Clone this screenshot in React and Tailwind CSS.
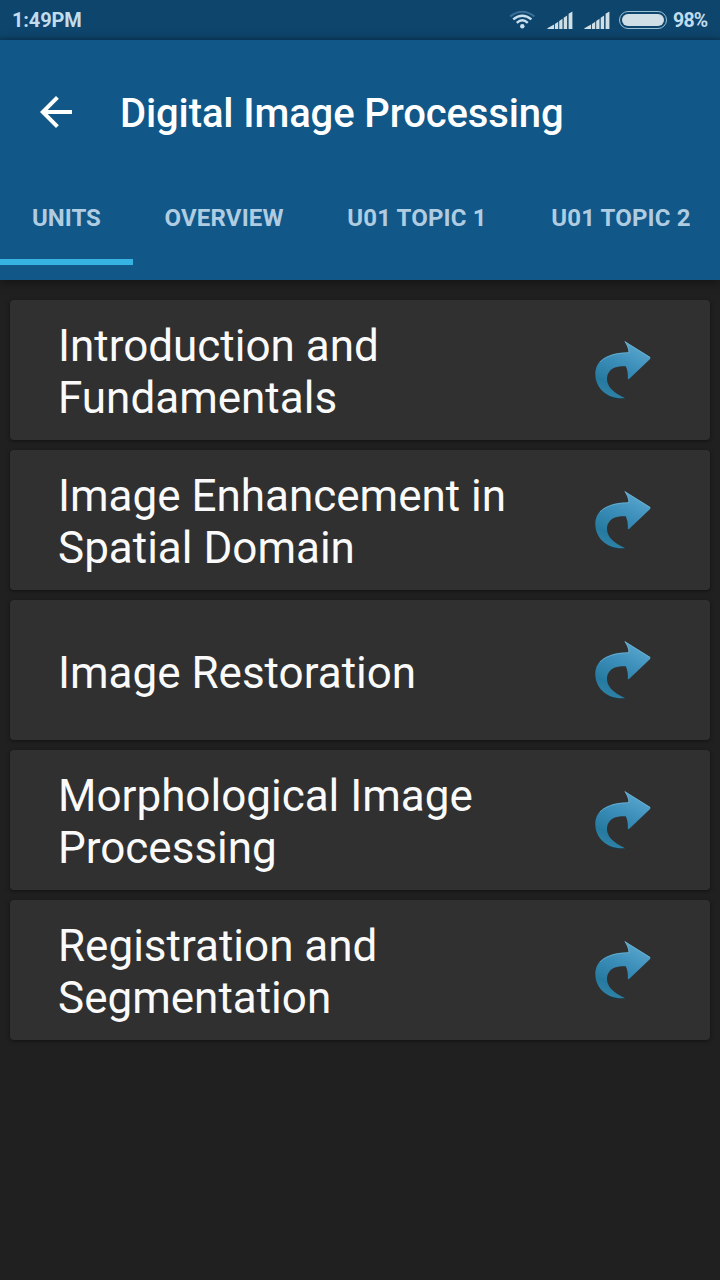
const units = [
  ["Introduction and", "Fundamentals"],
  ["Image Enhancement in", "Spatial Domain"],
  ["Image Restoration"],
  ["Morphological Image", "Processing"],
  ["Registration and", "Segmentation"],
];

const tabs = [
  { label: "UNITS", width: "w-[68.6px]", tracking: "tracking-normal" },
  { label: "OVERVIEW", width: "w-[118.7px]", tracking: "tracking-[0.15px]" },
  { label: "U01 TOPIC 1", width: "w-[140px]", tracking: "tracking-[0.15px]" },
  { label: "U01 TOPIC 2", width: "w-[140px]", tracking: "tracking-[0.15px]" },
];

function Wifi() {
  return (
    <svg className="h-5 w-[26px] shrink-0" viewBox="0 0 26 20" fill="none" strokeWidth="2.4">
      <path d="M1.2 6.4Q13.3-2.8 25.4 6.4" stroke="#3d7099" strokeWidth="2" />
      <path d="M4.2 9.4Q13.3 1.9 22.4 9.4M7.8 12.8Q13.3 7.6 18.8 12.8" stroke="#c9e0ee" />
      <circle cx="13.3" cy="16.3" r="2.2" fill="#c9e0ee" />
    </svg>
  );
}

function Signal() {
  return (
    <svg className="h-[18px] w-[26px] shrink-0" viewBox="-0.4 0 26 18" fill="#cfdfe5">
      <path d="M0 18V17.3L6.6 13.6V18ZM7.5 13L10.8 10.7V18H7.5ZM11.8 10L15.1 7.7V18H11.8ZM16.3 6.8L19.7 4.4V18H16.3ZM21.2 2.8L25 0.4V18H21.2Z" />
    </svg>
  );
}

function ForwardArrow({ id }) {
  return (
    <svg className="h-[90px] w-[90px] shrink-0" viewBox="0 0 90 90">
      <defs>
        <linearGradient id={id} x1="0.75" y1="0" x2="0.3" y2="1">
          <stop offset="0" stopColor="#5aa8d0" />
          <stop offset="0.45" stopColor="#3a8db8" />
          <stop offset="0.8" stopColor="#277a9f" />
          <stop offset="1" stopColor="#2e83a8" />
        </linearGradient>
      </defs>
      <ellipse cx="35" cy="73" rx="11" ry="1.1" fill="#20343d" />
      <path
        d="M44.4 15.9L69.9 31.8Q71 32.8 70.1 34L48.8 54.2L47.8 53.7Q48.3 46.5 45.8 41.2C42 41 38.3 41.3 35 42.6C30 44.6 27 48.6 27 54C27 60.5 31.5 67 45.2 73.2C35.5 74 28.3 71.3 23 66.5C18 62 15.3 55.5 15.3 49.3C15.3 43 17.5 38.5 21.5 35C28 29.3 37.5 27.4 48.5 27.2C48.6 23.2 46.6 19.5 44.4 15.9Z"
        fill={`url(#${id})`}
      />
      <path
        d="M20 36.9C27 30.2 37.5 28 49 27.7C49 23.5 47 19.4 44.9 16.6L70 32.5"
        fill="none"
        stroke="#8bcae3"
        strokeWidth="0.7"
        strokeOpacity="0.6"
      />
    </svg>
  );
}

export default function App() {
  return (
    <div className="flex h-[1280px] w-[720px] flex-col overflow-hidden bg-[#202020] font-['Roboto',sans-serif]">
      <div className="flex h-10 shrink-0 items-center justify-between bg-linear-to-b from-[#0e456c] from-90% to-[#0b3c60] pr-3 pl-3 text-[20px] text-[#c1dced]">
        <span className="font-bold tracking-[-0.15px]">1:49PM</span>
        <div className="flex items-center">
          <Wifi />
          <div className="ml-3 flex gap-[11px]">
            <Signal />
            <Signal />
          </div>
          <div className="ml-[9px] flex h-[18px] w-12 rounded-full border border-[#9cc1d5] p-[2px]">
            <div className="grow rounded-full bg-[#cfdfe5]" />
          </div>
          <span className="ml-[6px] w-[35px] pt-px text-[19.5px] leading-5 font-bold tracking-[-0.8px] whitespace-nowrap">98%</span>
        </div>
      </div>

      <header className="flex h-60 shrink-0 flex-col bg-[#115788] shadow-[0_2px_10px_rgba(0,0,0,0.45)]">
        <div className="flex h-[144px] items-center pl-8">
          <svg className="h-12 w-12 shrink-0" viewBox="0 0 24 24" fill="#fff">
            <path d="M20 11H7.83l5.59-5.59L12 4l-8 8 8 8 1.41-1.41L7.83 13H20v-2z" />
          </svg>
          <h1 className="ml-10 pt-1 text-[40px] font-medium tracking-[-0.12px] whitespace-nowrap text-white">Digital Image Processing</h1>
        </div>
        <nav className="flex h-[81px] shrink-0">
          {tabs.map((tab, i) => (
            <div
              key={tab.label}
              className={`flex shrink-0 items-start border-b-6 px-8 pt-[18px] ${i === 0 ? "border-[#36b2e3]" : "border-transparent"}`}
            >
              <span className={`${tab.width} ${tab.tracking} text-[24px] leading-[32px] font-bold whitespace-nowrap text-[#b0cce1]`}>{tab.label}</span>
            </div>
          ))}
        </nav>
      </header>

      <main className="flex flex-col gap-[10px] px-[10px] pt-5">
        {units.map((lines, i) => (
          <div
            key={lines[0]}
            className="flex h-[140px] items-center rounded-[4px] bg-[#303030] pr-[40px] pl-12 shadow-[0_1px_4px_rgba(0,0,0,0.5)]"
          >
            <div className={`grow text-[44px] leading-[52px] text-[#fafafa] ${lines.length === 1 ? "pt-[6px]" : "pt-1"}`}>
              {lines.map((line) => (
                <div key={line} className="whitespace-nowrap">{line}</div>
              ))}
            </div>
            <ForwardArrow id={`arrow-fill-${i}`} />
          </div>
        ))}
      </main>
    </div>
  );
}
